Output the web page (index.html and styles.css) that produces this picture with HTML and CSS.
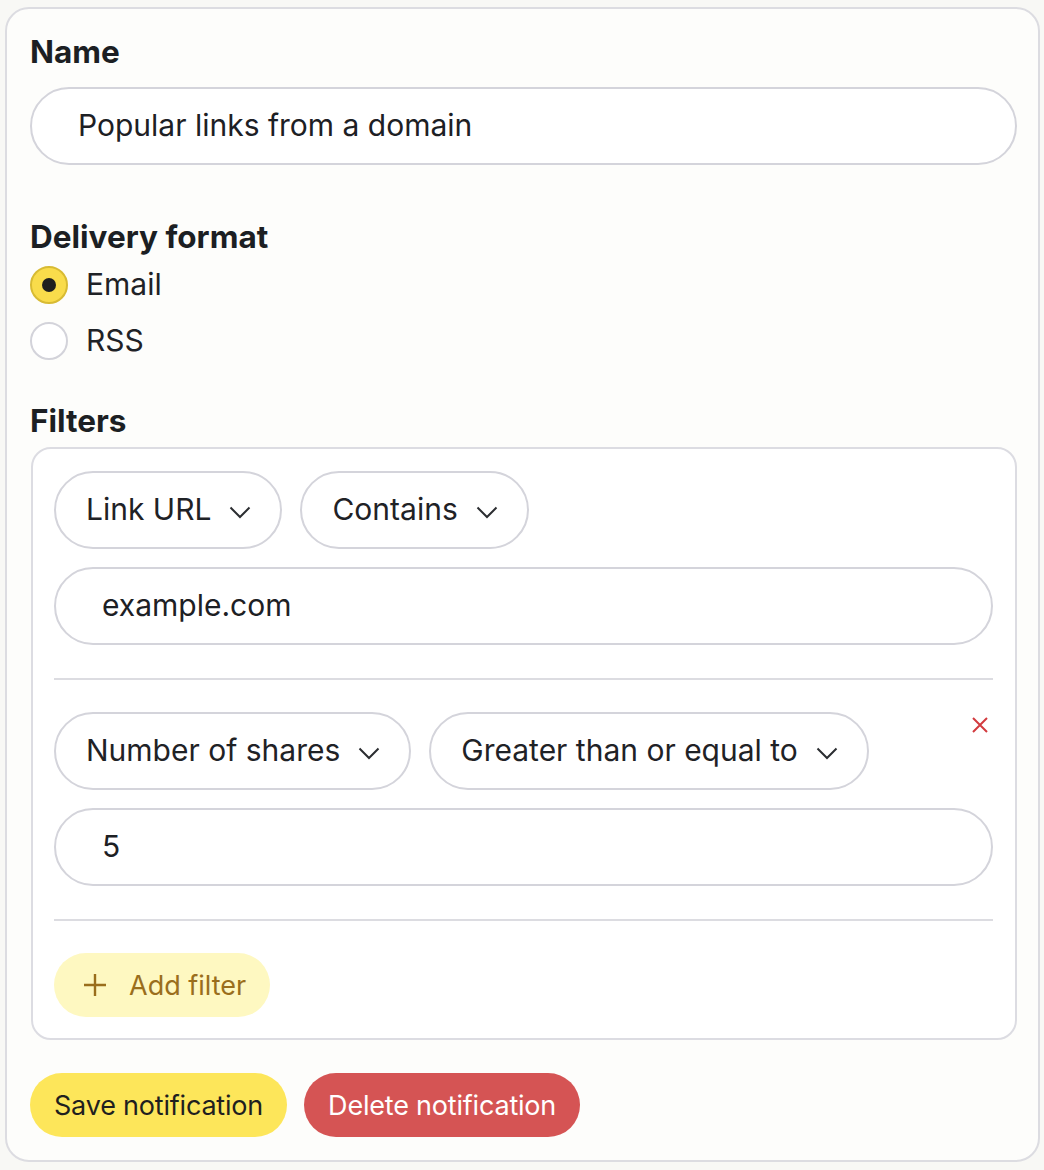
FILE: index.html
```html
<!DOCTYPE html>
<html>
<head>
<meta charset="utf-8">
<link rel="stylesheet" href="styles.css">
</head>
<body>
<form class="card">
  <div class="label label-name">Name</div>
  <div class="text-input name-input">Popular links from a domain</div>

  <div class="label label-format">Delivery format</div>
  <div class="radios">
    <div class="radio-row">
      <span class="radio checked"><span class="dot"></span></span>
      <span class="radio-text">Email</span>
    </div>
    <div class="radio-row">
      <span class="radio"></span>
      <span class="radio-text">RSS</span>
    </div>
  </div>

  <div class="label label-filters">Filters</div>
  <div class="filters">
    <div class="filter">
      <div class="filter-row">
        <div class="selects">
          <div class="select">Link URL<svg class="chev" viewBox="0 0 22 13"><path d="M1.5 1.5 L11 11 L20.5 1.5"/></svg></div>
          <div class="select">Contains<svg class="chev" viewBox="0 0 22 13"><path d="M1.5 1.5 L11 11 L20.5 1.5"/></svg></div>
        </div>
      </div>
      <div class="text-input filter-input">example.com</div>
    </div>
    <div class="divider"></div>
    <div class="filter">
      <div class="filter-row">
        <div class="selects">
          <div class="select">Number of shares<svg class="chev" viewBox="0 0 22 13"><path d="M1.5 1.5 L11 11 L20.5 1.5"/></svg></div>
          <div class="select">Greater than or equal to<svg class="chev" viewBox="0 0 22 13"><path d="M1.5 1.5 L11 11 L20.5 1.5"/></svg></div>
        </div>
        <span class="remove"><svg viewBox="0 0 16 16"><path d="M1 1 L15 15 M15 1 L1 15"/></svg></span>
      </div>
      <div class="text-input filter-input">5</div>
    </div>
    <div class="divider"></div>
    <div class="add-row">
      <span class="add-btn"><svg class="plus" viewBox="0 0 24 24"><path d="M12 1 V23 M1 12 H23"/></svg>Add filter</span>
    </div>
  </div>

  <div class="actions">
    <span class="btn btn-save">Save notification</span>
    <span class="btn btn-delete">Delete notification</span>
  </div>
</form>
</body>
</html>
```
FILE: styles.css
```css
html, body {
  margin: 0;
  padding: 0;
  background: #f8f8f5;
}
body {
  padding: 7px 4px 8px 5px;
  font-family: "Inter", "Noto Sans", sans-serif;
  color: #1f2226;
}
.card {
  box-sizing: border-box;
  width: 1035px;
  height: 1155px;
  background: #fdfdfb;
  border: 2px solid #dcdce1;
  border-radius: 24px;
  padding: 24px 23px 22px 23px;
  display: flex;
  flex-direction: column;
}
.label {
  font-size: 31.5px;
  line-height: 36px;
  font-weight: 700;
  color: #1c1f23;
  padding-top: 1px;
}
.label-name { margin-bottom: 17px; }
.label-format { margin-top: 53px; margin-bottom: -1px; }
.label-filters { margin-top: 42px; margin-bottom: 8px; }

.text-input {
  box-sizing: border-box;
  height: 78px;
  border: 2px solid #d4d4db;
  border-radius: 39px;
  background: #fff;
  font-size: 30px;
  display: flex;
  align-items: center;
  padding-left: 46px;
  padding-bottom: 3px;
  color: #1d2024;
}
.name-input { width: 987px; }

.radios {
  margin-top: 12px;
  display: flex;
  flex-direction: column;
  gap: 18px;
}
.radio-row {
  display: flex;
  align-items: center;
  height: 38px;
  gap: 18px;
}
.radio {
  box-sizing: border-box;
  width: 38px;
  height: 38px;
  border-radius: 50%;
  border: 2px solid #d3d3da;
  background: #fff;
  display: flex;
  align-items: center;
  justify-content: center;
}
.radio.checked {
  background: #f9dc4b;
  border-color: #d8bb33;
}
.dot {
  width: 14px;
  height: 14px;
  border-radius: 50%;
  background: #1f1f1f;
}
.radio-text {
  font-size: 30px;
  padding-bottom: 2px;
}

.filters {
  box-sizing: border-box;
  width: 986px;
  margin-left: 1px;
  background: #fff;
  border: 2px solid #dcdce2;
  border-radius: 20px;
  padding: 22px 22px 21px 21px;
}
.filter {
  display: flex;
  flex-direction: column;
  gap: 18px;
}
.filter-row {
  display: flex;
  justify-content: space-between;
  align-items: flex-start;
}
.selects {
  display: flex;
  gap: 18px;
}
.select {
  box-sizing: border-box;
  height: 78px;
  border: 2px solid #d4d4db;
  border-radius: 39px;
  padding: 0 29px 3px 30px;
  display: flex;
  align-items: center;
  gap: 18px;
  font-size: 30px;
  background: #fff;
}
.chev {
  width: 22px;
  height: 13px;
  fill: none;
  stroke: #2b2d31;
  stroke-width: 2;
  margin-top: 7px;
}
.remove {
  width: 26px;
  height: 26px;
  display: flex;
  align-items: center;
  justify-content: center;
}
.remove svg {
  width: 16px;
  height: 16px;
  fill: none;
  stroke: #d23b3f;
  stroke-width: 2;
}
.divider {
  height: 2px;
  background: #dcdce1;
  margin: 33px 0 32px;
}
.add-row { display: flex; }
.add-btn {
  height: 64px;
  border-radius: 32px;
  background: #fef8c1;
  color: #9a6e1c;
  display: flex;
  align-items: center;
  padding: 0 24px 0 29px;
  gap: 22px;
  font-size: 27px;
}
.plus {
  width: 24px;
  height: 24px;
  fill: none;
  stroke: #9a6e1c;
  stroke-width: 2.4;
}
.actions {
  margin-top: 33px;
  display: flex;
  gap: 17px;
}
.btn {
  height: 64px;
  border-radius: 32px;
  padding: 0 24px;
  display: flex;
  align-items: center;
  font-size: 27px;
  letter-spacing: -0.2px;
}
.btn-save {
  background: #fde65a;
  color: #1f1f1f;
}
.btn-delete {
  background: #d55454;
  color: #fff;
}
```
